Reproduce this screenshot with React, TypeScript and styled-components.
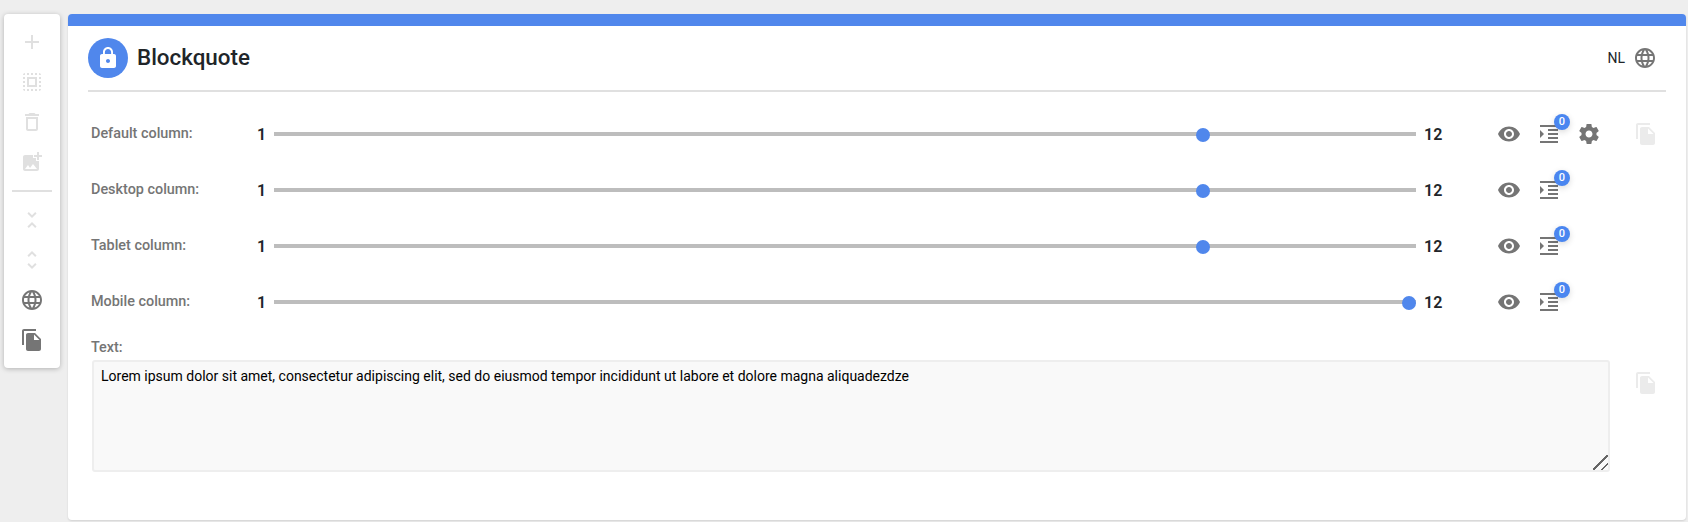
import React from 'react';
import styled, { createGlobalStyle } from 'styled-components';

const ICONS = {
    add: 'M19 13h-6v6h-2v-6H5v-2h6V5h2v6h6v2z',
    selectAll:
        'M3 5h2V3c-1.1 0-2 .9-2 2zm0 8h2v-2H3v2zm4 8h2v-2H7v2zM3 9h2V7H3v2zm10-6h-2v2h2V3zm6 0v2h2c0-1.1-.9-2-2-2zM5 21v-2H3c0 1.1.9 2 2 2zm-2-4h2v-2H3v2zM9 3H7v2h2V3zm2 18h2v-2h-2v2zm8-8h2v-2h-2v2zm0 8c1.1 0 2-.9 2-2h-2v2zm0-12h2V7h-2v2zm0 8h2v-2h-2v2zm-4 4h2v-2h-2v2zm0-16h2V3h-2v2zM7 17h10V7H7v10zm2-8h6v6H9V9z',
    trash: 'M6 19c0 1.1.9 2 2 2h8c1.1 0 2-.9 2-2V7H6v12zM8 9h8v10H8V9zm7.5-5l-1-1h-5l-1 1H5v2h14V4z',
    addPhoto:
        'M19 7v2.99s-1.99.01-2 0V7h-3s.01-1.99 0-2h3V2h2v3h3v2h-3zm-3 4V8h-3V5H5c-1.1 0-2 .9-2 2v12c0 1.1.9 2 2 2h12c1.1 0 2-.9 2-2v-8h-3zM5 19l3-4 2 3 3-4 4 5H5z',
    unfoldLess:
        'M7.41 18.59L8.83 20 12 16.83 15.17 20l1.41-1.41L12 14l-4.59 4.59zm9.18-13.18L15.17 4 12 7.17 8.83 4 7.41 5.41 12 10l4.59-4.59z',
    unfoldMore:
        'M12 5.83L15.17 9l1.41-1.41L12 3 7.41 7.59 8.83 9 12 5.83zm0 12.34L8.83 15l-1.42 1.41L12 21l4.59-4.59L15.17 15 12 18.17z',
    language:
        'M11.99 2C6.47 2 2 6.48 2 12s4.47 10 9.99 10C17.52 22 22 17.52 22 12S17.52 2 11.99 2zm6.93 6h-2.95c-.32-1.25-.78-2.45-1.38-3.56 1.84.63 3.37 1.91 4.33 3.56zM12 4.04c.83 1.2 1.48 2.53 1.91 3.96h-3.82c.43-1.43 1.08-2.76 1.91-3.96zM4.26 14C4.1 13.36 4 12.69 4 12s.1-1.36.26-2h3.38c-.08.66-.14 1.32-.14 2 0 .68.06 1.34.14 2H4.26zm.82 2h2.95c.32 1.25.78 2.45 1.38 3.56-1.84-.63-3.37-1.9-4.33-3.56zm2.95-8H5.08c.96-1.66 2.49-2.93 4.33-3.56C8.81 5.55 8.35 6.75 8.03 8zM12 19.96c-.83-1.2-1.48-2.53-1.91-3.96h3.82c-.43 1.43-1.08 2.76-1.91 3.96zM14.34 14H9.66c-.09-.66-.16-1.32-.16-2 0-.68.07-1.35.16-2h4.68c.09.65.16 1.32.16 2 0 .68-.07 1.34-.16 2zm.25 5.56c.6-1.11 1.06-2.31 1.38-3.56h2.95c-.96 1.65-2.49 2.93-4.33 3.56zM16.36 14c.08-.66.14-1.32.14-2 0-.68-.06-1.34-.14-2h3.38c.16.64.26 1.31.26 2s-.1 1.36-.26 2h-3.38z',
    fileCopy:
        'M16 1H4c-1.1 0-2 .9-2 2v14h2V3h12V1zm-1 4l6 6v10c0 1.1-.9 2-2 2H7.99C6.89 23 6 22.1 6 21l.01-14c0-1.1.89-2 1.99-2h7zm-1 7h5.5L14 6.5V12z',
    lock: 'M18 8h-1V6c0-2.76-2.24-5-5-5S7 3.24 7 6v2H6c-1.1 0-2 .9-2 2v10c0 1.1.9 2 2 2h12c1.1 0 2-.9 2-2V10c0-1.1-.9-2-2-2zm-6 9c-1.1 0-2-.9-2-2s.9-2 2-2 2 .9 2 2-.9 2-2 2zm3.1-9H8.9V6c0-1.71 1.39-3.1 3.1-3.1 1.71 0 3.1 1.39 3.1 3.1v2z',
    eye: 'M12 4.5C7 4.5 2.73 7.61 1 12c1.73 4.39 6 7.5 11 7.5s9.27-3.11 11-7.5c-1.73-4.39-6-7.5-11-7.5zM12 17c-2.76 0-5-2.24-5-5s2.24-5 5-5 5 2.24 5 5-2.24 5-5 5zm0-8c-1.66 0-3 1.34-3 3s1.34 3 3 3 3-1.34 3-3-1.34-3-3-3z',
    indent: 'M3 21h18v-2H3v2zM3 8v8l4-4-4-4zm8 9h10v-2H11v2zM3 3v2h18V3H3zm8 6h10V7H11v2zm0 4h10v-2H11v2z',
    settings:
        'M19.43 12.98c.04-.32.07-.64.07-.98s-.03-.66-.07-.98l2.11-1.65c.19-.15.24-.42.12-.64l-2-3.46c-.12-.22-.39-.3-.61-.22l-2.49 1c-.52-.4-1.08-.73-1.69-.98l-.38-2.65C14.46 2.18 14.25 2 14 2h-4c-.25 0-.46.18-.49.42l-.38 2.65c-.61.25-1.17.59-1.69.98l-2.49-1c-.23-.09-.49 0-.61.22l-2 3.46c-.13.22-.07.49.12.64l2.11 1.65c-.04.32-.07.65-.07.98s.03.66.07.98l-2.11 1.65c-.19.15-.24.42-.12.64l2 3.46c.12.22.39.3.61.22l2.49-1c.52.4 1.08.73 1.69.98l.38 2.65c.03.24.24.42.49.42h4c.25 0 .46-.18.49-.42l.38-2.65c.61-.25 1.17-.59 1.69-.98l2.49 1c.23.09.49 0 .61-.22l2-3.46c.12-.22.07-.49-.12-.64l-2.11-1.65zM12 15.5c-1.93 0-3.5-1.57-3.5-3.5s1.57-3.5 3.5-3.5 3.5 1.57 3.5 3.5-1.57 3.5-3.5 3.5z',
};

const GlobalStyle = createGlobalStyle`
    html, body {
        margin: 0;
        height: 100%;
        overflow: hidden;
        background: #eeeeee;
        font-family: Roboto, "Liberation Sans", sans-serif;
    }
`;

const Page = styled.div`
    display: flex;
    align-items: flex-start;
    gap: 8px;
    padding: 14px 2px 2px 4px;
    height: 522px;
    box-sizing: border-box;
`;

const Sidebar = styled.div`
    width: 56px;
    flex-shrink: 0;
    padding: 8px 0;
    display: flex;
    flex-direction: column;
    align-items: center;
    background: #ffffff;
    border-radius: 4px;
    box-shadow: 0 1px 5px rgba(0, 0, 0, 0.25);
`;

const SideButton = styled.div`
    width: 40px;
    height: 40px;
    display: flex;
    align-items: center;
    justify-content: center;
`;

const SideDivider = styled.div`
    width: 40px;
    height: 2px;
    margin: 8px 0;
    background: #e0e0e0;
`;

const Svg = styled.svg<{ $color?: string }>`
    width: 24px;
    height: 24px;
    display: block;
    fill: ${(p) => p.$color || '#757575'};
`;

const Card = styled.div`
    flex: 1;
    height: 506px;
    box-sizing: border-box;
    background: #ffffff;
    border-radius: 4px;
    overflow: hidden;
    box-shadow: 0 1px 2px rgba(0, 0, 0, 0.12);
`;

const TopBar = styled.div`
    height: 12px;
    background: #5087ec;
`;

const CardBody = styled.div`
    padding: 12px 20px 0;
`;

const Header = styled.div`
    display: flex;
    align-items: center;
    height: 40px;
    padding-bottom: 12px;
    border-bottom: 2px solid #e0e0e0;
`;

const LockCircle = styled.div`
    width: 40px;
    height: 40px;
    border-radius: 50%;
    background: #5087ec;
    display: flex;
    align-items: center;
    justify-content: center;
`;

const Title = styled.div`
    margin-left: 9px;
    padding-bottom: 3px;
    flex: 1;
    font-size: 22.4px;
    font-weight: 500;
    color: #212529;
`;

const Lang = styled.div`
    font-size: 14px;
    color: #212529;
    margin-right: 8px;
`;

const HeaderGlobe = styled.div`
    margin-right: 9px;
`;

const Form = styled.div`
    padding-top: 14px;
`;

const Row = styled.div`
    display: flex;
    align-items: center;
    height: 56px;
    padding-left: 3px;
`;

const Label = styled.div`
    width: 166px;
    font-size: 14.4px;
    font-weight: 500;
    color: #757575;
    padding-bottom: 2px;
`;

const MinValue = styled.div`
    width: 17px;
    font-size: 16px;
    font-weight: 600;
    color: #212529;
`;

const Track = styled.div`
    flex: 1;
    height: 4px;
    position: relative;
    background: #bdbdbd;
`;

const Thumb = styled.div`
    position: absolute;
    top: -4px;
    width: 14px;
    height: 14px;
    border-radius: 50%;
    background: #5087ec;
`;

const MaxValue = styled.div`
    width: 65px;
    margin-left: 8px;
    font-size: 16px;
    font-weight: 600;
    color: #212529;
`;

const Actions = styled.div`
    width: 120px;
    display: flex;
`;

const ActionButton = styled.div`
    width: 40px;
    height: 40px;
    position: relative;
    display: flex;
    align-items: center;
    justify-content: center;
`;

const Badge = styled.div`
    position: absolute;
    top: 0;
    left: 25px;
    width: 16px;
    height: 16px;
    border-radius: 50%;
    background: #4a86f0;
    color: #ffffff;
    font-size: 11px;
    font-weight: 500;
    line-height: 16px;
    text-align: center;
    box-shadow: 0 2px 6px rgba(0, 0, 0, 0.15);
`;

const CopyButton = styled.div`
    width: 40px;
    height: 40px;
    margin-left: 17px;
    flex-shrink: 0;
    display: flex;
    align-items: center;
    justify-content: center;
`;

const TextLabel = styled.div`
    margin-top: 9px;
    margin-bottom: 3px;
    padding-left: 3px;
    font-size: 14.4px;
    font-weight: 500;
    line-height: 18px;
    color: #757575;
`;

const TextRow = styled.div`
    display: flex;
    align-items: flex-start;
    padding-left: 4px;
`;

const TextArea = styled.textarea`
    width: 1518px;
    height: 112px;
    margin: 0;
    flex-shrink: 0;
    box-sizing: border-box;
    padding: 5px 7px;
    background: #f9f9f9;
    border: 2px solid #eeeeee;
    border-radius: 3px;
    outline: none;
    font-family: Roboto, "Liberation Sans", sans-serif;
    font-size: 14px;
    line-height: 18px;
    color: #000000;

    &::-webkit-resizer {
        background: linear-gradient(
            135deg,
            transparent 0 46%,
            #666666 46% 54%,
            transparent 54% 74%,
            #666666 74% 82%,
            transparent 82%
        );
    }
`;

const CopyOffset = styled.div`
    margin-top: 3px;
    margin-left: -1px;
`;

type IconName = keyof typeof ICONS;

const Icon = ({ name, color }: { name: IconName; color?: string }) => (
    <Svg viewBox="0 0 24 24" $color={color}>
        <path d={ICONS[name]} />
    </Svg>
);

const DISABLED = '#e0e0e0';
const FADED = '#ebebeb';
const TEXT =
    'Lorem ipsum dolor sit amet, consectetur adipiscing elit, sed do eiusmod tempor incididunt ut labore et dolore magna aliquadezdze';

const columns = [
    { label: 'Default column:', position: 0.8174, settings: true },
    { label: 'Desktop column:', position: 0.8174 },
    { label: 'Tablet column:', position: 0.8174 },
    { label: 'Mobile column:', position: 1 },
];

const App = () => (
    <>
        <GlobalStyle />
        <Page>
            <Sidebar>
                <SideButton><Icon name="add" color={DISABLED} /></SideButton>
                <SideButton><Icon name="selectAll" color={DISABLED} /></SideButton>
                <SideButton><Icon name="trash" color={DISABLED} /></SideButton>
                <SideButton><Icon name="addPhoto" color={DISABLED} /></SideButton>
                <SideDivider />
                <SideButton><Icon name="unfoldLess" color={DISABLED} /></SideButton>
                <SideButton><Icon name="unfoldMore" color={DISABLED} /></SideButton>
                <SideButton><Icon name="language" /></SideButton>
                <SideButton><Icon name="fileCopy" /></SideButton>
            </Sidebar>
            <Card>
                <TopBar />
                <CardBody>
                    <Header>
                        <LockCircle><Icon name="lock" color="#ffffff" /></LockCircle>
                        <Title>Blockquote</Title>
                        <Lang>NL</Lang>
                        <HeaderGlobe><Icon name="language" /></HeaderGlobe>
                    </Header>
                    <Form>
                        {columns.map((col, i) => (
                            <Row key={col.label}>
                                <Label>{col.label}</Label>
                                <MinValue>1</MinValue>
                                <Track>
                                    <Thumb
                                        style={{
                                            left: `calc((100% - 14px) * ${col.position})`,
                                        }}
                                    />
                                </Track>
                                <MaxValue>12</MaxValue>
                                <Actions>
                                    <ActionButton><Icon name="eye" /></ActionButton>
                                    <ActionButton>
                                        <Icon name="indent" />
                                        <Badge>0</Badge>
                                    </ActionButton>
                                    {col.settings && (
                                        <ActionButton><Icon name="settings" /></ActionButton>
                                    )}
                                </Actions>
                                <CopyButton>
                                    {i === 0 && <Icon name="fileCopy" color={FADED} />}
                                </CopyButton>
                            </Row>
                        ))}
                        <TextLabel>Text:</TextLabel>
                        <TextRow>
                            <TextArea defaultValue={TEXT} />
                            <CopyOffset>
                                <CopyButton><Icon name="fileCopy" color={FADED} /></CopyButton>
                            </CopyOffset>
                        </TextRow>
                    </Form>
                </CardBody>
            </Card>
        </Page>
    </>
);

export default App;
